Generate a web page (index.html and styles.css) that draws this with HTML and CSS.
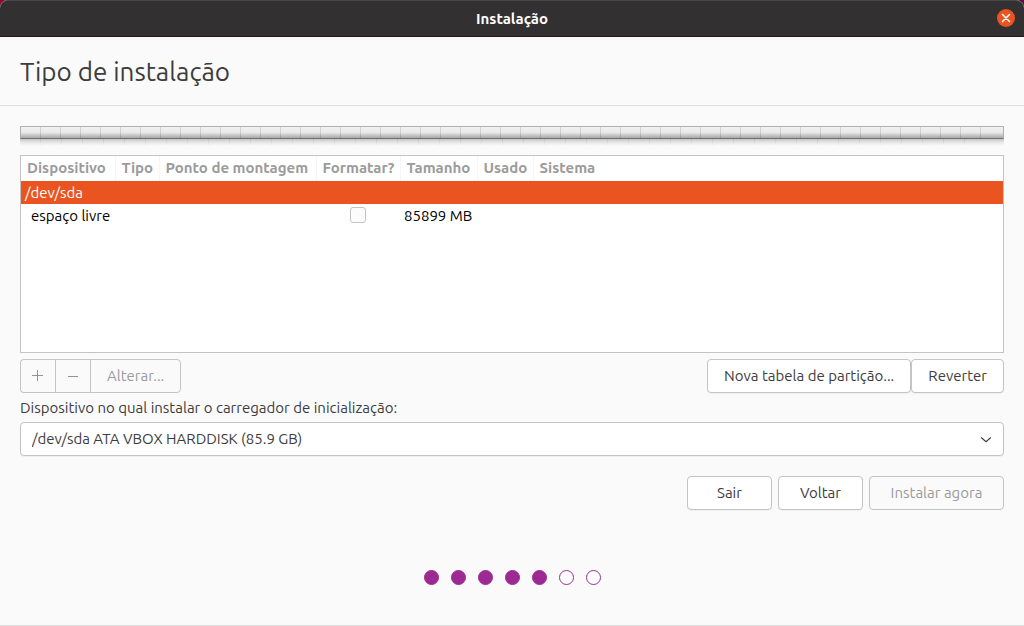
FILE: index.html
```html
<!DOCTYPE html>
<html lang="pt-BR">
<head>
<meta charset="utf-8">
<title>Instalação</title>
<link rel="stylesheet" href="styles.css">
</head>
<body>
<div class="window">
  <header class="titlebar">
    <span class="titlebar-text">Instalação</span>
    <button class="close" type="button" aria-label="Fechar">
      <svg width="18" height="18" viewBox="0 0 18 18"><path d="M5.500 5.500l7 7M12.500 5.500l-7 7" stroke="#fff" stroke-width="1.500" stroke-linecap="round"/></svg>
    </button>
  </header>
  <div class="heading"><h1>Tipo de instalação</h1></div>
  <main class="content">
    <div class="diskbar"><div class="diskbar-body"></div><div class="diskbar-reflection"></div></div>
    <div class="table-frame">
      <table class="partitions">
        <colgroup><col class="c-device"><col class="c-type"><col class="c-mount"><col class="c-format"><col class="c-size"><col class="c-used"><col></colgroup>
        <thead>
          <tr><th>Dispositivo</th><th>Tipo</th><th>Ponto de montagem</th><th>Formatar?</th><th>Tamanho</th><th>Usado</th><th>Sistema</th></tr>
        </thead>
        <tbody>
          <tr class="selected"><td colspan="7">/dev/sda</td></tr>
          <tr><td class="child">espaço livre</td><td></td><td></td><td class="check-cell"><input class="check" type="checkbox" aria-label="Formatar espaço livre"></td><td>85899 MB</td><td></td><td></td></tr>
        </tbody>
      </table>
    </div>
    <div class="toolbar">
      <div class="linked">
        <button class="btn icon-btn" type="button" disabled aria-label="Adicionar"><svg width="12" height="12" viewBox="0 0 12 12"><path d="M0 5.500h11M5.500 0v11" stroke="#929595"/></svg></button>
        <button class="btn icon-btn" type="button" disabled aria-label="Remover"><svg width="12" height="12" viewBox="0 0 12 12"><path d="M1 6.500h10" stroke="#929595"/></svg></button>
        <button class="btn" type="button" disabled>Alterar...</button>
      </div>
      <div class="table-actions">
        <button class="btn" type="button">Nova tabela de partição...</button>
        <button class="btn" type="button">Reverter</button>
      </div>
    </div>
    <label class="boot-label" for="boot">Dispositivo no qual instalar o carregador de inicialização:</label>
    <div class="select-wrap">
      <select class="select" id="boot"><option>/dev/sda ATA VBOX HARDDISK (85.9 GB)</option></select>
      <svg class="chevron" width="12" height="8" viewBox="0 0 12 8"><path d="M1.200 1.500L6 5.700l4.800-4.200" fill="none" stroke="#3d3d3d" stroke-width="1.100"/></svg>
    </div>
    <div class="nav">
      <button class="btn small" type="button">Sair</button>
      <button class="btn small" type="button">Voltar</button>
      <button class="btn wide" type="button" disabled>Instalar agora</button>
    </div>
    <div class="steps">
      <span class="dot done"></span><span class="dot done"></span><span class="dot done"></span><span class="dot done"></span><span class="dot done"></span><span class="dot"></span><span class="dot"></span>
    </div>
  </main>
</div>
</body>
</html>
```
FILE: styles.css
```css
* { box-sizing: border-box; }
body {
  margin: 0;
  background: linear-gradient(90deg, #8b0c2c, #5c0b3d);
  color: #3d3d3d;
  font: 15px/20px Ubuntu, "Open Sans", "Noto Sans", sans-serif;
}
.window {
  display: flex;
  flex-direction: column;
  min-height: 100vh;
  border-radius: 8px 8px 0 0;
  background: #fafafa;
}
.titlebar {
  display: grid;
  grid-template-columns: 1fr auto 1fr;
  align-items: center;
  height: 37px;
  padding: 0 9px 1px;
  border-top: 1px solid #484646;
  border-bottom: 1px solid #1c1b1b;
  border-radius: 8px 8px 0 0;
  background: #333031;
  color: #fff;
}
.titlebar-text { grid-column: 2; padding-top: 2px; font-weight: 700; }
.close {
  justify-self: end;
  width: 18px;
  height: 18px;
  padding: 0;
  border: 0;
  border-radius: 50%;
  background: #e95420;
}
.close svg { display: block; }
.heading { padding: 17px 20px 15px; border-bottom: 1px solid #dfdfdf; }
h1 { margin: 0; font-size: 26px; font-weight: 400; line-height: 36px; }
.content {
  display: flex;
  flex: 1;
  flex-direction: column;
  padding: 20px 20px 0;
  border-bottom: 1px solid #dfdfdf;
}
.diskbar { margin-bottom: 8px; }
.diskbar-body {
  height: 13px;
  border: 1px solid #b0b0b0;
  border-bottom-color: #707070;
  background:
    repeating-linear-gradient(90deg, transparent 0 19px, #0000001f 19px 20px) 0 0 / calc(100% - 20px) 100% no-repeat,
    linear-gradient(#f3f3f3, #e8e8e8 50%, #a8a8a8);
}
.diskbar-reflection {
  height: 8px;
  background:
    linear-gradient(#fafafa00, #fafafa),
    repeating-linear-gradient(90deg, transparent 0 20px, #00000014 20px 21px) 0 0 / calc(100% - 20px) 100% no-repeat,
    linear-gradient(#c4c4c4, #f0f0f0);
}
.table-frame { height: 198px; border: 1px solid #c4c4c4; background: #fff; }
.partitions { width: 100%; border-collapse: collapse; table-layout: fixed; color: #000; }
.c-device { width: 94px; }
.c-type { width: 44px; }
.c-mount { width: 157px; }
.c-format { width: 84px; }
.c-size { width: 77px; }
.c-used { width: 56px; }
th {
  height: 25px;
  padding: 0 0 2px 6px;
  border-right: 1px solid #f6f6f6;
  color: #9b9b9b;
  font-weight: 700;
  text-align: left;
  white-space: nowrap;
}
th:last-child { border-right: 0; }
td { height: 23px; padding: 0 4px; white-space: nowrap; }
td.child { padding-left: 10px; }
td.check-cell { padding-bottom: 2px; }
.selected { background: #e95420; color: #fff; }
.check {
  display: block;
  width: 16px;
  height: 16px;
  margin: 0 auto;
  border: 1px solid #c4c4c4;
  border-radius: 3px;
  background: #fbfbfb;
  appearance: none;
}
.toolbar { display: flex; justify-content: space-between; margin-top: 6px; }
.linked, .table-actions { display: flex; }
.btn {
  height: 34px;
  padding: 0 16px;
  border: 1px solid #c4c4c4;
  border-radius: 4px;
  background: #fff;
  box-shadow: 0 1px 1px #0000000d;
  color: #3d3d3d;
  font: inherit;
}
.btn:disabled { background: #fafafa; box-shadow: none; color: #9b9b9b; }
.linked .btn { border-radius: 0; }
.linked .btn:first-child { border-radius: 4px 0 0 4px; }
.linked .btn:last-child { border-radius: 0 4px 4px 0; }
.linked .icon-btn { width: 35px; padding: 0 11px; border-right: 0; }
.icon-btn svg { display: block; }
.boot-label { margin: 5px 0 4px; }
.select-wrap { position: relative; }
.select {
  display: block;
  width: 100%;
  height: 34px;
  padding: 0 11px;
  border: 1px solid #c4c4c4;
  border-radius: 4px;
  background: #fff;
  box-shadow: 0 1px 1px #0000000d;
  color: #3d3d3d;
  font: inherit;
  appearance: none;
}
.chevron { position: absolute; top: 14px; right: 12px; pointer-events: none; }
.nav { display: flex; justify-content: flex-end; gap: 6px; margin-top: 20px; }
.small { width: 85px; }
.wide { width: 135px; }
.steps { display: flex; justify-content: center; gap: 12px; margin-top: 60px; }
.dot { width: 15px; height: 15px; border: 1px solid #9c2a92; border-radius: 50%; background: #fff; }
.done { background: #9c2a92; }
```
